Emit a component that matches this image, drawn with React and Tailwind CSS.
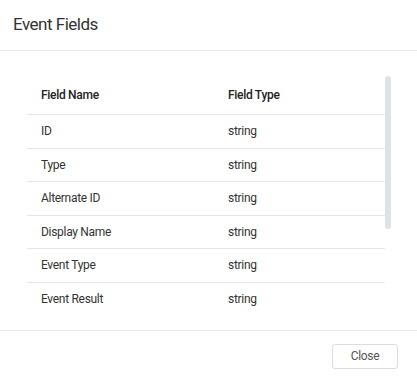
const fields = [
  { name: "ID", type: "string" },
  { name: "Type", type: "string" },
  { name: "Alternate ID", type: "string" },
  { name: "Display Name", type: "string" },
  { name: "Event Type", type: "string" },
  { name: "Event Result", type: "string" },
];

const App = () => {
  return (
    <div className="w-[417px] h-[382px] bg-white flex flex-col font-['Roboto',sans-serif] text-[#212121]">
      {/* Header */}
      <div className="h-[51px] flex items-center px-[13px] border-b border-[#ebebeb]">
        <h2 className="text-[17px] tracking-[-0.5px] text-[#333] leading-none -mt-[1px]">Event Fields</h2>
      </div>

      {/* Body */}
      <div className="flex-1 flex pl-[27px] pt-[24px]">
        <div className="w-[358px]">
          <div className="h-[40px] flex items-center border-b border-[#e6e6e6] text-[12px] tracking-[-0.3px] font-medium text-[#222]">
            <div className="w-[201px] pl-[14px]">Field Name</div>
            <div>Field Type</div>
          </div>
          {fields.map((f, i) => (
            <div
              key={f.name}
              className={
                "h-[33.5px] flex items-center text-[12px] tracking-[-0.3px] text-[#333] " +
                (i < fields.length - 1 ? "border-b border-[#e6e6e6]" : "")
              }
            >
              <div className="w-[201px] pl-[14px]">{f.name}</div>
              <div>{f.type}</div>
            </div>
          ))}
        </div>
        {/* Scrollbar */}
        <div className="w-[6px] pt-[1px]">
          <div className="h-[153px] rounded-full bg-[#dfe2ec]"></div>
        </div>
      </div>

      {/* Footer */}
      <div className="h-[52px] flex items-center justify-end pr-[19px] border-t border-[#ebebeb]">
        <button className="w-[66px] h-[25px] border border-[#dcdcdc] rounded-[3px] text-[12px] tracking-[-0.3px] text-[#555] bg-white -mt-[1px]">
          Close
        </button>
      </div>
    </div>
  );
};

export default App;
